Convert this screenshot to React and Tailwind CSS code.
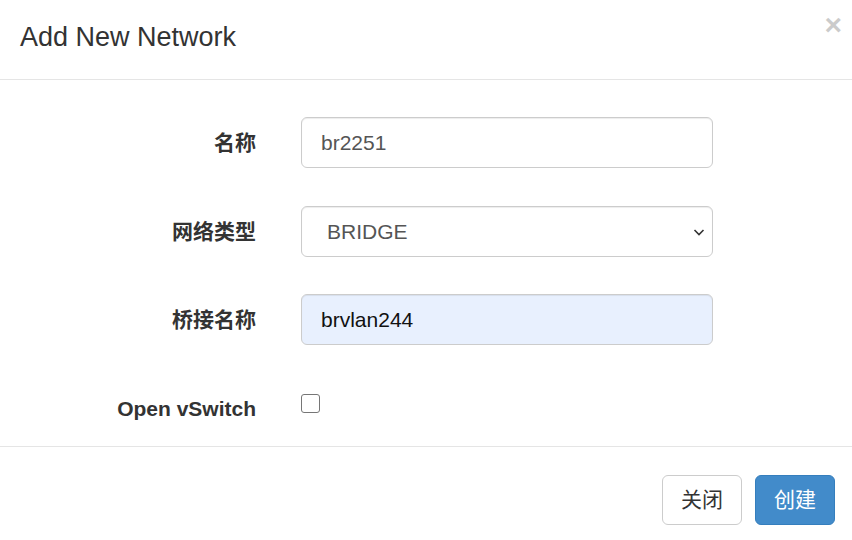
import React, { useState } from 'react';

const font = { fontFamily: '"Liberation Sans", Arial, "Noto Sans CJK SC", sans-serif' };

function Row({ label, className = '', children }) {
  return (
    <div className={'flex items-center h-[51px] ' + className}>
      <label className="w-[256px] shrink-0 text-right text-[21px] font-bold text-[#333]">{label}</label>
      <div className="ml-[45px] w-[412px]">{children}</div>
    </div>
  );
}

export default function App() {
  const [name, setName] = useState('br2251');
  const [type, setType] = useState('BRIDGE');
  const [bridge, setBridge] = useState('brvlan244');
  const [ovs, setOvs] = useState(false);

  const inputCls =
    'w-full h-[51px] px-[19px] text-[21px] border border-[#ccc] rounded-[6px] shadow-[inset_0_1px_1px_rgba(0,0,0,0.075)] outline-none';

  return (
    <div className="w-[852px] h-[540px] bg-white overflow-hidden text-[#333]" style={font}>
      {/* Header */}
      <div className="relative h-[80px] border-b border-[#e5e5e5] flex items-center px-[20px]">
        <h4 className="text-[27px] leading-none text-[#333] -mt-[4px]">Add New Network</h4>
        <button className="absolute right-[10px] top-[10px] text-[30px] font-bold leading-none text-black opacity-20">
          ×
        </button>
      </div>

      {/* Body */}
      <div className="pt-[37px] pb-[12px] flex flex-col">
        <Row label="名称">
          <input className={inputCls + ' text-[#555]'} value={name} onChange={(e) => setName(e.target.value)} />
        </Row>
        <Row label="网络类型" className="mt-[38px]">
          <div className="relative">
            <select
              className={inputCls + ' appearance-none bg-white text-[#555] pl-[25px]'}
              value={type}
              onChange={(e) => setType(e.target.value)}
            >
              <option>BRIDGE</option>
              <option>NAT</option>
            </select>
            <svg className="absolute right-[8px] top-[21px] pointer-events-none" width="12" height="10" viewBox="0 0 12 10">
              <path d="M1.5 3 L6 7.5 L10.5 3" fill="none" stroke="#333" strokeWidth="1.6" />
            </svg>
          </div>
        </Row>
        <Row label="桥接名称" className="mt-[37px]">
          <input
            className={inputCls + ' bg-[#e8f0fe] text-[#111]'}
            value={bridge}
            onChange={(e) => setBridge(e.target.value)}
          />
        </Row>
        <div className="flex h-[51px] mt-[38px]">
          <label className="w-[256px] shrink-0 text-right text-[21px] font-bold text-[#333] self-center">Open vSwitch</label>
          <div className="ml-[45px] pt-[11px]">
            <button
              onClick={() => setOvs(!ovs)}
              className="block w-[19px] h-[19px] border border-[#767676] rounded-[3px] bg-white"
            >
              {ovs && (
                <svg viewBox="0 0 16 16" className="w-full h-full">
                  <path d="M3 8 L7 12 L13 4" fill="none" stroke="#333" strokeWidth="2" />
                </svg>
              )}
            </button>
          </div>
        </div>
      </div>

      {/* Footer */}
      <div className="border-t border-[#e5e5e5] pt-[28px] pr-[17px] flex justify-end gap-[13px]">
        <button className="w-[80px] h-[50px] text-[21px] text-[#333] bg-white border border-[#ccc] rounded-[6px]">
          关闭
        </button>
        <button className="w-[80px] h-[50px] text-[21px] text-white bg-[#428bca] border border-[#357ebd] rounded-[6px]">
          创建
        </button>
      </div>
    </div>
  );
}
